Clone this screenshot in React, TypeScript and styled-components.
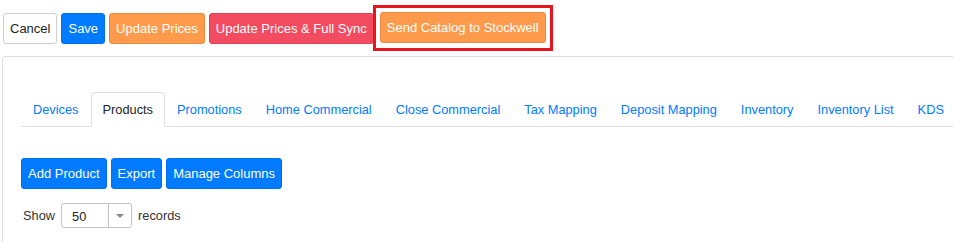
import React from 'react';
import styled, { createGlobalStyle, css } from 'styled-components';

const GlobalStyle = createGlobalStyle`
  html, body {
    margin: 0;
    padding: 0;
    background: #fff;
    overflow: hidden;
  }
  body {
    font-family: 'Liberation Sans', Arial, sans-serif;
    font-size: 12.8px;
    color: #212529;
  }
`;

type Variant = 'light' | 'primary' | 'orange' | 'danger';

const variants = {
  light: css`
    color: #212529;
    background-color: #fff;
    border-color: #cfcfcf;
  `,
  primary: css`
    color: #fff;
    background-color: #007bff;
    border-color: #0071eb;
  `,
  orange: css`
    color: #fff;
    background-color: #fd9a4b;
    border-color: #e88a3e;
  `,
  danger: css`
    color: #fff;
    background-color: #f34b5f;
    border-color: #e04356;
  `,
};

const Button = styled.button<{ $variant: Variant }>`
  height: 31px;
  padding: 0 6px;
  border: 1px solid;
  border-radius: 3px;
  font-family: 'Liberation Sans', Arial, sans-serif;
  font-size: 13px;
  line-height: 29px;
  white-space: nowrap;
  cursor: pointer;
  ${p => variants[p.$variant]}
`;

const Toolbar = styled.div`
  display: flex;
  align-items: center;
  gap: 4px;
  padding: 5px 0 0 3px;
`;

const Highlight = styled.div`
  display: flex;
  margin-left: -5px;
  padding: 4px 4px 5px;
  border: 3px solid #e8141e;
`;

const Panel = styled.div`
  margin: 5px 0 0 2px;
  height: calc(100vh - 56px);
  padding: 35px 0 0 18px;
  border: 1px solid #dcdcdc;
  border-right: none;
  border-bottom: none;
  border-radius: 4px 0 0 0;
  box-sizing: border-box;
  overflow: hidden;
`;

const Tabs = styled.ul`
  display: flex;
  margin: 0;
  padding: 0;
  list-style: none;
  border-bottom: 1px solid #dee2e6;
`;

const Tab = styled.li<{ $active?: boolean }>`
  height: 33px;
  margin-bottom: -1px;
  padding: 0 11px;
  line-height: 33px;
  white-space: nowrap;
  color: ${p => (p.$active ? '#212529' : '#007bff')};
  border: 1px solid ${p => (p.$active ? '#dee2e6' : 'transparent')};
  border-bottom-color: ${p => (p.$active ? '#fff' : 'transparent')};
  border-radius: 4px 4px 0 0;
  background: ${p => (p.$active ? '#fff' : 'transparent')};
`;

const Actions = styled.div`
  display: flex;
  gap: 4px;
  margin-top: 31px;
`;

const ShowRow = styled.div`
  display: flex;
  align-items: center;
  gap: 6px;
  margin-top: 14px;
  padding-left: 2px;
  color: #333;
`;

const Select = styled.div`
  display: flex;
  width: 71px;
  height: 25px;
  border: 1px solid #c4c4c4;
  border-radius: 3px;
  box-sizing: border-box;
`;

const SelectValue = styled.div`
  flex: 1;
  padding: 5px 0 0 10px;
  color: #222;
`;

const SelectArrow = styled.div`
  display: flex;
  align-items: center;
  justify-content: center;
  width: 22px;
  border-left: 1px solid #c4c4c4;

  &::after {
    content: '';
    border-left: 4px solid transparent;
    border-right: 4px solid transparent;
    border-top: 4px solid #888;
  }
`;

const tabs = [
  'Devices',
  'Products',
  'Promotions',
  'Home Commercial',
  'Close Commercial',
  'Tax Mapping',
  'Deposit Mapping',
  'Inventory',
  'Inventory List',
  'KDS',
];

export default function App() {
  return (
    <>
      <GlobalStyle />
      <Toolbar>
        <Button $variant="light">Cancel</Button>
        <Button $variant="primary">Save</Button>
        <Button $variant="orange">Update Prices</Button>
        <Button $variant="danger">Update Prices &amp; Full Sync</Button>
        <Highlight>
          <Button $variant="orange">Send Catalog to Stockwell</Button>
        </Highlight>
      </Toolbar>
      <Panel>
        <Tabs>
          {tabs.map(tab => (
            <Tab key={tab} $active={tab === 'Products'}>
              {tab}
            </Tab>
          ))}
        </Tabs>
        <Actions>
          <Button $variant="primary">Add Product</Button>
          <Button $variant="primary">Export</Button>
          <Button $variant="primary">Manage Columns</Button>
        </Actions>
        <ShowRow>
          Show
          <Select>
            <SelectValue>50</SelectValue>
            <SelectArrow />
          </Select>
          records
        </ShowRow>
      </Panel>
    </>
  );
}
